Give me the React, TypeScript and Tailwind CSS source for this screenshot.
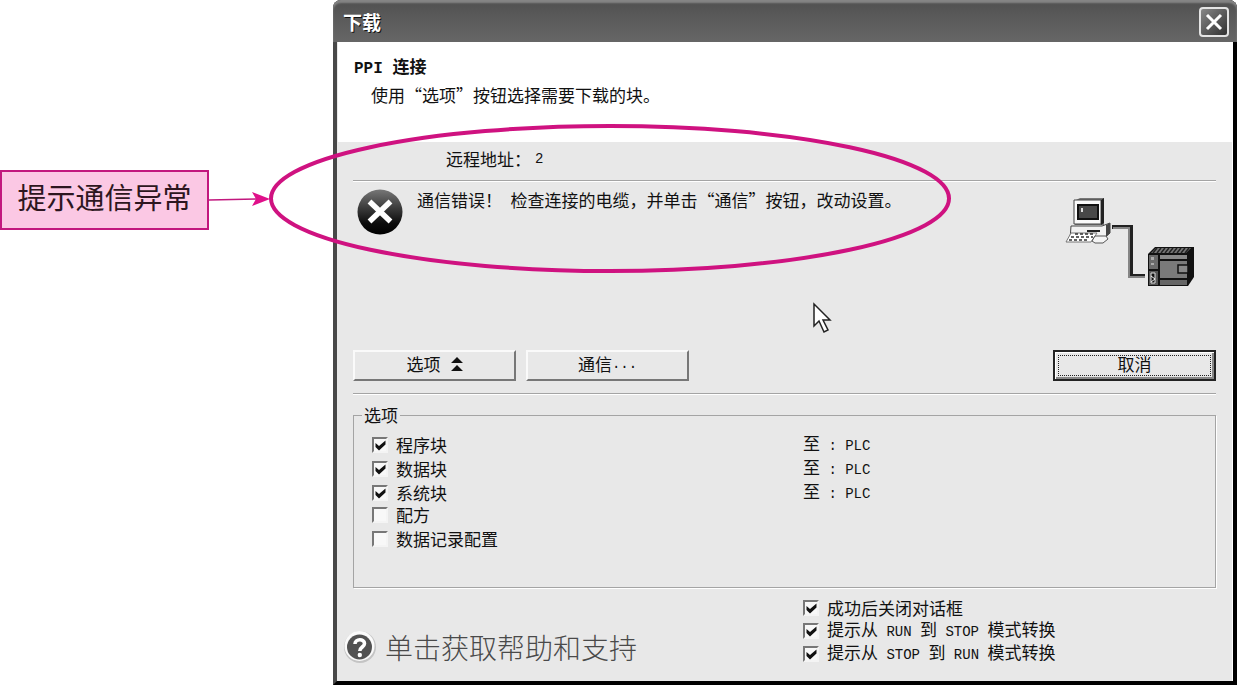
import { useState } from "react";
import type { ReactNode } from "react";

interface CheckItem {
  id: string;
  label: ReactNode;
  checked: boolean;
  target?: string;
}

const Latin = ({ children }: { children: string }) => (
  <span className="font-['Liberation_Mono',monospace] text-[14px] whitespace-pre">
    {children}
  </span>
);

const blockItems: CheckItem[] = [
  { id: "program", label: "程序块", checked: true, target: "PLC" },
  { id: "data", label: "数据块", checked: true, target: "PLC" },
  { id: "system", label: "系统块", checked: true, target: "PLC" },
  { id: "recipe", label: "配方", checked: false },
  { id: "datalog", label: "数据记录配置", checked: false },
];

const modeItems: CheckItem[] = [
  { id: "close", label: "成功后关闭对话框", checked: true },
  {
    id: "run-stop",
    label: (
      <>
        提示从<Latin> RUN </Latin>到<Latin> STOP </Latin>模式转换
      </>
    ),
    checked: true,
  },
  {
    id: "stop-run",
    label: (
      <>
        提示从<Latin> STOP </Latin>到<Latin> RUN </Latin>模式转换
      </>
    ),
    checked: true,
  },
];

function Checkbox({ item }: { item: CheckItem }) {
  const [checked, setChecked] = useState(item.checked);

  return (
    <label htmlFor={item.id} className="flex items-center gap-2">
      <span className="grid size-4 shrink-0">
        <input
          id={item.id}
          type="checkbox"
          checked={checked}
          onChange={(e) => setChecked(e.target.checked)}
          className="peer col-start-1 row-start-1 size-4 appearance-none border-2 border-t-[#777] border-r-[#f4f4f4] border-b-[#f4f4f4] border-l-[#777] bg-[#f8f8f8]"
        />
        <svg
          viewBox="0 0 16 16"
          className="pointer-events-none invisible col-start-1 row-start-1 size-4 peer-checked:visible"
        >
          <path d="M3.5 6 L7 9 L13.5 3.5 V7.5 L7 13.5 L3.5 10 Z" fill="#111" />
        </svg>
      </span>
      <span className="whitespace-nowrap">{item.label}</span>
    </label>
  );
}

function Divider() {
  return <hr className="h-0.5 border-t border-b border-t-[#a4a4a4] border-b-white" />;
}

function ErrorIcon() {
  return (
    <svg viewBox="0 0 46 48" className="h-12 w-[46px] shrink-0">
      <defs>
        <linearGradient id="errorBall" x1="0" y1="0" x2="0" y2="1">
          <stop offset="0" stopColor="#777" />
          <stop offset="0.35" stopColor="#444" />
          <stop offset="0.75" stopColor="#0c0c0c" />
          <stop offset="1" stopColor="#000" />
        </linearGradient>
      </defs>
      <circle cx="23" cy="24" r="22.5" fill="url(#errorBall)" />
      <path
        d="M12.5 13.5 L33.5 33.5 M33.5 13.5 L12.5 33.5"
        stroke="#fff"
        strokeWidth="5.5"
      />
    </svg>
  );
}

function HelpIcon() {
  return (
    <svg viewBox="0 0 34 34" className="size-[34px] shrink-0">
      <circle cx="17" cy="17" r="16" fill="#c4c4c4" />
      <circle cx="16.5" cy="16" r="15" fill="#fafafa" />
      <circle cx="16.5" cy="17" r="12.5" fill="#525252" />
      <path
        d="M12 14 C12 8.5 21.5 8.5 21.5 13.5 C21.5 17 16.8 17 16.8 21"
        fill="none"
        stroke="#fff"
        strokeWidth="3.6"
      />
      <circle cx="16.8" cy="25" r="2.2" fill="#fff" />
    </svg>
  );
}

function ConnectionDiagram() {
  const slots = [0, 1, 2, 3, 4, 5, 6, 7, 8];

  return (
    <svg viewBox="0 0 132 92" className="h-[92px] w-[132px] shrink-0">
      {/* computer */}
      <path d="M12 4 L16 2 H40 V29 H11 Z" fill="#777" />
      <path d="M10 4 H37 V28 H10 Z" fill="#fafafa" stroke="#444" />
      <path d="M37 4 L40 2 V27 L37 29 Z" fill="#222" />
      <rect x="14" y="9" width="20" height="14" fill="#484848" stroke="#111" strokeWidth="2" />
      <rect x="17" y="12" width="2" height="4" fill="#ddd" />
      <path d="M7 30 H38 L46 27 V37 L38 44 H6 Z" fill="#f2f2f2" stroke="#444" />
      <path d="M42 29 L46 27 V37 L42 41 Z" fill="#444" />
      <path d="M23 35 H36" stroke="#222" strokeWidth="2" />
      <path d="M7 37 H33 L27 46 H2 Z" fill="#fff" stroke="#777" />
      <path d="M7 41 H29 M11 38 H31 M5 44 H25" stroke="#333" strokeWidth="1.5" strokeDasharray="3 2" />
      <path d="M31 40 H42 L44 43 L39 47 H31 L28 45 Z" fill="#f4f4f4" stroke="#555" />
      {/* cable */}
      <path d="M48 31 H67 V80 H81" fill="none" stroke="#222" strokeWidth="4" />
      <path d="M49 32 H65 V81 H81" fill="none" stroke="#858585" strokeWidth="2" />
      {/* plc */}
      <path d="M84 58 L91 51 H130 V81 L124 90 H84 Z" fill="#111" />
      <path d="M87 57 L92 52 H127 L122 57 Z" fill="#777" />
      {slots.map((n) => (
        <path key={n} d={`M${89 + n * 4} 57 l4 -5`} stroke="#222" strokeWidth="1.5" />
      ))}
      <rect x="85" y="59" width="9" height="14" fill="#6a6a6a" />
      <rect x="87" y="61" width="3" height="3" fill="#aaa" />
      <rect x="87" y="67" width="3" height="2" fill="#aaa" />
      <rect x="85" y="75" width="9" height="14" fill="#555" />
      <path d="M87 77 H91 V87 H87 Z" fill="#111" stroke="#ddd" />
      <path d="M87 80 L91 83 L87 86" fill="none" stroke="#eee" />
      <rect x="96" y="59" width="27" height="4" fill="#888" />
      <rect x="96" y="65" width="27" height="17" fill="#7a7a7a" />
      <rect x="96" y="84" width="27" height="5" fill="#666" />
      <path d="M124 69 H114 V77 H124 Z" fill="#888" stroke="#111" strokeWidth="1.5" />
    </svg>
  );
}

const raised =
  "flex h-[31px] w-[163px] items-center justify-center border-2 border-t-[#fafafa] border-l-[#fafafa] border-r-[#777] border-b-[#777] bg-[#e8e8e8] pb-1";

function Callout() {
  return (
    <aside className="flex w-[333px] shrink-0 items-center self-start pt-[170px]">
      <div className="flex h-[60px] w-[209px] items-center justify-center border-2 border-[#c2187e] bg-[#fbc8e4] pb-2 text-[29px] text-[#2d1620]">
        提示通信异常
      </div>
      <svg viewBox="0 0 62 16" className="h-4 w-[62px]">
        <path d="M0 8 L48 7" stroke="#c2187e" strokeWidth="1.6" />
        <path d="M43 0 L61 7 L43 14 L47 7 Z" fill="#e0108a" />
      </svg>
    </aside>
  );
}

export default function App() {
  return (
    <div className="relative flex min-h-screen bg-white font-['Noto_Sans_CJK_SC',sans-serif] text-[17px] leading-6 text-[#111]">
      <Callout />

      <main className="flex min-w-0 flex-1 flex-col rounded-t-lg border-r-4 border-b-4 border-l-4 border-r-black border-b-black border-l-[#484848] bg-[#e8e8e8]">
        <header className="-mx-1 flex h-[42px] items-center justify-between rounded-t-lg bg-linear-to-b from-[#505050] via-[#5c5c5c] to-[#666] pt-0.5 pr-2 pl-2.5 shadow-[inset_0_3px_2px_#858585]">
          <h1 className="text-[19px] font-bold text-white [text-shadow:1px_1px_0_#111]">
            下载
          </h1>
          <button
            type="button"
            aria-label="关闭"
            className="flex size-[30px] items-center justify-center rounded-sm border-2 border-[#e4e4e4] bg-linear-to-br from-[#888] to-[#333]"
          >
            <svg viewBox="0 0 18 18" className="size-[18px]">
              <path d="M2 2 L16 16 M16 2 L2 16" stroke="#fff" strokeWidth="3" />
            </svg>
          </button>
        </header>

        <section className="ml-px h-[100px] bg-white px-4 pt-3">
          <h2 className="font-bold">
            <span className="font-['Liberation_Mono',monospace] text-[16px] whitespace-pre">
              PPI{" "}
            </span>
            连接
          </h2>
          <p className="pl-[17px] leading-7">使用“选项”按钮选择需要下载的块。</p>
        </section>

        <div className="flex flex-1 flex-col border-r border-white px-4">
          <p className="flex h-[38px] items-center gap-1 pb-1 pl-[93px]">
            远程地址：<Latin>2</Latin>
          </p>
          <Divider />

          <section className="flex h-[168px] items-start pt-1.5 pr-5 pl-1">
            <ErrorIcon />
            <p className="ml-3.5 flex-1">
              通信错误！<Latin> </Latin>检查连接的电缆，并单击“通信”按钮，改动设置。
            </p>
            <div className="pt-2">
              <ConnectionDiagram />
            </div>
          </section>

          <div className="flex gap-2.5 pb-3">
            <button type="button" className={raised}>
              选项
              <svg viewBox="0 0 12 16" className="ml-2.5 h-4 w-3">
                <path d="M6 1 L12 7 H0 Z M6 9 L12 15 H0 Z" fill="#111" />
              </svg>
            </button>
            <button type="button" className={raised}>
              通信<Latin>...</Latin>
            </button>
            <button
              type="button"
              className="ml-auto h-[31px] w-[163px] border-2 border-[#222] bg-[#e8e8e8] p-[3px] shadow-[inset_1px_1px_0_#fff,inset_-2px_-2px_0_#888]"
            >
              <span className="flex h-full items-center justify-center border border-dotted border-[#222] pb-1">
                取消
              </span>
            </button>
          </div>
          <Divider />

          <fieldset className="mt-2 h-[185px] border border-[#a4a4a4] px-[18px] shadow-[1px_1px_0_#fff]">
            <legend className="-ml-2.5 px-0.5">选项</legend>
            <ul className="mt-1">
              {blockItems.map((item) => (
                <li key={item.id} className="grid h-6 grid-cols-[431px_1fr] items-center">
                  <Checkbox item={item} />
                  {item.target && (
                    <span>
                      至<Latin>{` : ${item.target}`}</Latin>
                    </span>
                  )}
                </li>
              ))}
            </ul>
          </fieldset>

          <footer className="grid grid-cols-[450px_1fr] pt-2">
            <a
              href="#help"
              className="-ml-2.5 flex items-center gap-2 pt-8 text-[28px] leading-9 font-light text-[#4a4a4a]"
            >
              <HelpIcon />
              单击获取帮助和支持
            </a>
            <div>
              {modeItems.map((item) => (
                <div key={item.id} className="flex h-[23px] items-center">
                  <Checkbox item={item} />
                </div>
              ))}
            </div>
          </footer>
        </div>
      </main>

      {/* highlight ring around the error message */}
      <svg
        viewBox="0 0 682 150"
        className="pointer-events-none absolute top-[123px] left-[269px] h-[150px] w-[682px]"
      >
        <ellipse cx="341" cy="75.5" rx="339" ry="72.5" fill="none" stroke="#cf1280" strokeWidth="4" />
      </svg>

      <svg
        viewBox="0 0 20 32"
        className="pointer-events-none absolute top-[302px] left-[812px] h-8 w-5"
      >
        <path
          d="M2 2 V24 L7 19 L12 30 L16 28 L11 18 H18 Z"
          fill="#fff"
          stroke="#222"
          strokeWidth="1.5"
        />
      </svg>
    </div>
  );
}
